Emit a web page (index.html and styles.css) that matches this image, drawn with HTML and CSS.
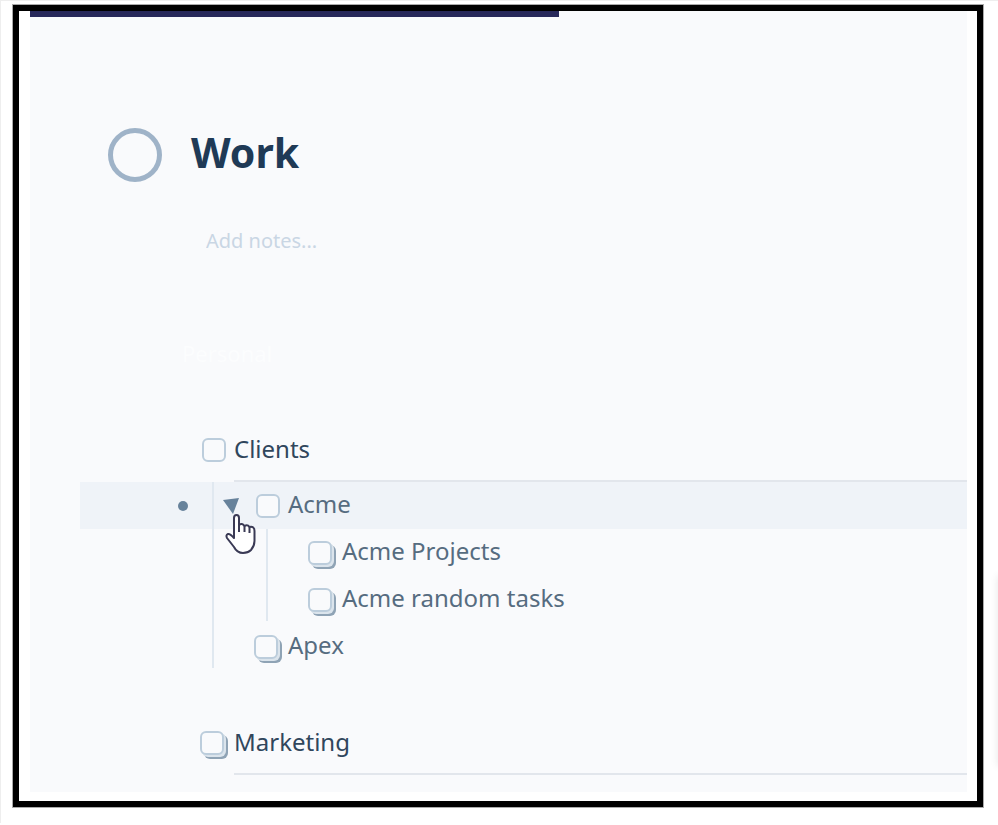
FILE: index.html
```
<!DOCTYPE html>
<html lang="en">
<head>
  <meta charset="UTF-8">
  <meta name="viewport" content="width=device-width, initial-scale=1.0">
  <title>Work</title>
  <link rel="stylesheet" href="styles.css">
</head>
<body>
  <div class="frame">
    <main class="panel">
      <div class="progress"></div>

      <header class="project">
        <button class="status" aria-label="Complete project"></button>
        <h1>Work</h1>
      </header>
      <input class="notes" type="text" placeholder="Add notes..." aria-label="Notes">
      <div class="ghost" aria-hidden="true">Personal</div>

      <ul class="outline">
        <li>
          <div class="row heading">
            <input type="checkbox" id="clients">
            <label for="clients">Clients</label>
          </div>
          <ul class="children">
            <li>
              <div class="row active">
                <button class="handle" aria-label="Move Acme"></button>
                <button class="toggle" aria-label="Collapse Acme">
                  <svg width="16" height="16" viewBox="0 0 16 16"><path d="M0 2L16 0L10 16Z" fill="#67829b"/></svg>
                </button>
                <input type="checkbox" id="acme">
                <label for="acme">Acme</label>
                <svg class="cursor" width="32" height="42" viewBox="0 0 32 42">
                  <path d="M9 25V5Q9 2 11.500 2Q14 2 14 5V12Q17 9.500 19.500 13Q22.500 11 24.500 14Q29.500 13 29.500 18V28Q29.500 33 26 37Q23 40 18 40Q12 40 9 34L2 25Q0.500 22 3 21Q5 20.500 9 25Z" fill="#fff" stroke="#3a3a55" stroke-width="2" stroke-linejoin="round"/>
                  <path d="M14 11V19M19.500 13V19M24.500 14V20" fill="none" stroke="#3a3a55" stroke-width="2"/>
                </svg>
              </div>
              <ul class="children">
                <li class="row">
                  <input type="checkbox" id="acme-projects" class="stack">
                  <label for="acme-projects">Acme Projects</label>
                </li>
                <li class="row">
                  <input type="checkbox" id="acme-random" class="stack">
                  <label for="acme-random">Acme random tasks</label>
                </li>
              </ul>
            </li>
            <li class="row">
              <input type="checkbox" id="apex" class="stack">
              <label for="apex">Apex</label>
            </li>
          </ul>
        </li>
        <li>
          <div class="row heading">
            <input type="checkbox" id="marketing" class="stack">
            <label for="marketing">Marketing</label>
          </div>
        </li>
      </ul>
    </main>
  </div>
  <div class="side-card"></div>
</body>
</html>
```
FILE: styles.css
```
* {
  box-sizing: border-box;
}
body {
  margin: 0;
  padding: 4px 15px 16px 12px;
  position: relative;
  overflow-x: hidden;
  background: #fff;
  border-top: 1px solid #eee;
  border-left: 1px solid #eee;
  font-family: "Noto Sans", "Open Sans", sans-serif;
}
button {
  padding: 0;
  border: none;
  background: none;
  cursor: pointer;
}
ul {
  list-style: none;
  margin: 0;
  padding: 0;
}
.frame {
  border: 6px solid #000;
  outline: 1px solid #aaa;
  padding: 0 10px 9px 11px;
}
.panel {
  background: #f9fafc;
  padding-bottom: 17px;
}
.progress {
  width: 56%;
  min-width: 529px;
  height: 6px;
  background: #27285a;
}

/* project title */
.project {
  display: flex;
  align-items: center;
  gap: 29px;
  padding: 111px 0 0 78px;
}
.status {
  width: 54px;
  height: 54px;
  border: 5px solid #9fb3c8;
  border-radius: 50%;
}
h1 {
  margin: 0;
  font-size: 41px;
  line-height: 48px;
  padding-bottom: 6px;
  color: #1f3a56;
}
.notes {
  display: block;
  width: 60%;
  height: 32px;
  margin: 42px 0 0 176px;
  padding: 0;
  border: none;
  background: none;
  font: 20px "Noto Sans", "Open Sans", sans-serif;
}
.notes::placeholder {
  color: #c9d6e4;
}
.ghost {
  margin: 81px 0 0 152px;
  font-size: 22px;
  line-height: 32px;
  color: #fcfdfe;
}

/* task outline */
.outline {
  --indent: 122px;
  margin: 57px 0 0 50px;
}
.row {
  position: relative;
  display: flex;
  align-items: center;
  gap: 8px;
  height: 47px;
  padding-left: var(--indent);
  font-size: 24px;
  color: #566c80;
}
.row label {
  line-height: 32px;
  padding-bottom: 3px;
}
.heading {
  height: 56px;
  padding-bottom: 8px;
  color: #30465c;
}
.heading::after {
  content: "";
  position: absolute;
  left: 154px;
  right: 0;
  bottom: 0;
  height: 2px;
  background: #e2e6ec;
}
.outline > li + li {
  margin-top: 49px;
}
.children {
  position: relative;
  --indent: 176px;
}
.children .children {
  --indent: 230px;
}
.children::before {
  content: "";
  position: absolute;
  z-index: 1;
  top: 0;
  bottom: 2px;
  left: 132px;
  width: 2px;
  background: #e0e8f0;
}
.children .children::before {
  left: 186px;
}
.active {
  padding-left: 98px;
  gap: 0;
  background: #eff3f8;
}
.active label {
  margin-left: 8px;
}
.handle {
  width: 10px;
  height: 10px;
  margin-right: 35px;
  border-radius: 50%;
  background: #67829b;
}
.toggle {
  height: 16px;
  margin-right: 17px;
}
.toggle svg {
  display: block;
}
.cursor {
  position: absolute;
  z-index: 2;
  top: 31px;
  left: 145px;
}
input[type="checkbox"] {
  appearance: none;
  flex: none;
  width: 24px;
  height: 24px;
  margin: 0;
  border: 2px solid #bccddc;
  border-radius: 6px;
  background: #f9fafc;
}
.row .stack {
  position: relative;
  left: -2px;
  box-shadow: 2px 2px 0 #dbe4ec, 4px 4px 0 #8fa3b5;
}

/* edge of the card beside the frame */
.side-card {
  position: absolute;
  top: 575px;
  left: 100%;
  width: 40px;
  height: 190px;
  box-shadow: 0 0 8px rgba(0, 0, 0, 0.1);
}
```
